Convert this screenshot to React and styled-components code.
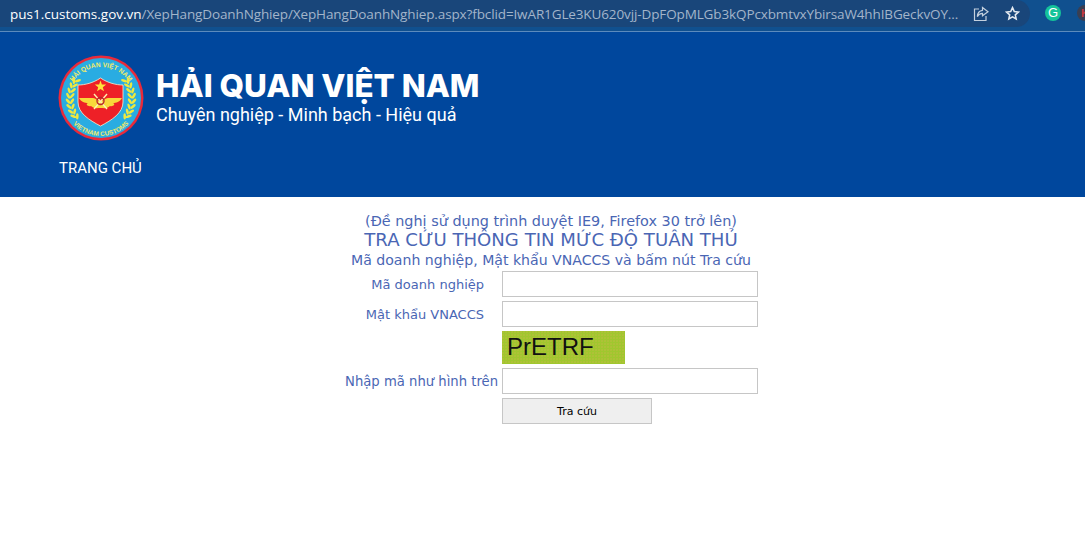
import React from "react";
import styled, { createGlobalStyle } from "styled-components";

const Global = createGlobalStyle`
  html, body { margin: 0; padding: 0; background: #fff; }
  body { width: 1085px; height: 556px; overflow: hidden; }
`;

const Chrome = styled.div`
  height: 31px;
  background: #10508f;
  border-bottom: 1px solid #5c8bbd;
  display: flex;
  align-items: flex-start;
`;

const Omnibox = styled.div`
  flex: none;
  width: 1030px;
  height: 27px;
  background: #19467a;
  border-radius: 0 14px 14px 0;
  display: flex;
  align-items: center;
  padding-left: 10px;
  box-sizing: border-box;
  font-family: "Open Sans", "Noto Sans", sans-serif;
  font-size: 13.5px;
  white-space: nowrap;
`;

const Host = styled.span`
  color: #fff;
`;

const UrlPath = styled.span`
  color: #a3b5ca;
  letter-spacing: -0.12px;
`;

const UrlText = styled.div`
  width: 954px;
`;

const OmniIcons = styled.div`
  display: flex;
  align-items: center;
  gap: 16px;
  margin-left: 9px;
`;

const Extensions = styled.div`
  display: flex;
  align-items: center;
  gap: 16px;
  padding: 5px 0 0 15px;
  overflow: hidden;
  flex: 1;
`;

const GrammarlyDot = styled.div`
  width: 16px;
  height: 16px;
  flex: none;
  border-radius: 50%;
  background: #15c39a;
  color: #fff;
  font: 13px/16px "Liberation Sans", sans-serif;
  text-align: center;
`;

const AvatarDot = styled.div`
  width: 16px;
  height: 16px;
  flex: none;
  border-radius: 50%;
  background: #3a3f52;
  color: #c8393f;
  font: bold 11px/16px "Liberation Sans", sans-serif;
  text-align: center;
`;

const Header = styled.header`
  height: 165px;
  background: #00479d;
  box-sizing: border-box;
  padding: 22px 0 0 57px;
  color: #fff;
`;

const Brand = styled.div`
  display: flex;
  align-items: flex-start;
  gap: 11px;
`;

const BrandText = styled.div`
  padding-top: 13px;
`;

const SiteTitle = styled.div`
  font-family: Inter, "Noto Sans", sans-serif;
  font-weight: 800;
  font-size: 31.4px;
  line-height: 38px;
  white-space: nowrap;
`;

const Slogan = styled.div`
  font-family: Roboto, sans-serif;
  font-size: 18px;
  line-height: 21px;
  margin-top: -1px;
`;

const NavLink = styled.div`
  font-family: Roboto, sans-serif;
  font-size: 15px;
  line-height: 20px;
  margin: 16px 0 0 2px;
`;

const Main = styled.main`
  width: 1102px;
  padding-top: 15px;
  font-family: "DejaVu Sans", Verdana, sans-serif;
  color: #4a66b4;
  text-align: center;
`;

const Note = styled.div`
  font-size: ${(p) => p.$size}px;
  line-height: ${(p) => p.$line}px;
  white-space: nowrap;
`;

const Heading = styled.div`
  font-size: 18.1px;
  line-height: 20px;
  white-space: nowrap;
`;

const Form = styled.div`
  display: grid;
  grid-template-columns: 498px 256px;
  column-gap: 4px;
  row-gap: 4px;
  margin-top: 1px;
  align-items: center;
`;

const Label = styled.label`
  font-size: ${(p) => p.$size || 13}px;
  text-align: right;
  padding-right: ${(p) => p.$pad || 0}px;
`;

const Field = styled.input`
  width: 256px;
  height: 26px;
  box-sizing: border-box;
  border: 1px solid #c6c6c6;
  background: #fff;
  padding: 0 4px;
  display: block;
  outline: none;
`;

const Captcha = styled.div`
  grid-column: 2;
  width: 123px;
  height: 33px;
  box-sizing: border-box;
  padding-left: 5px;
  background-color: #a0c72e;
  background-image: radial-gradient(circle at 1px 1px, #b3c03c 0.6px, transparent 1px);
  background-size: 3px 3px;
  font-family: "Liberation Sans", Arial, sans-serif;
  font-size: 24px;
  line-height: 31px;
  color: #111;
  text-align: left;
`;

const SubmitButton = styled.button`
  grid-column: 2;
  width: 150px;
  height: 26px;
  box-sizing: border-box;
  border: 1px solid #c6c6c6;
  background: #efefef;
  color: #000;
  font-family: "DejaVu Sans", Verdana, sans-serif;
  font-size: 11px;
  padding: 0;
`;

const ShareIcon = () => (
  <svg width="16" height="16" viewBox="0 0 16 16" fill="none" stroke="#c4d0de" strokeWidth="1.2">
    <path d="M6 3H1.5v11.5H13V10" />
    <path d="M9.5 1.5 15 5.8l-5.5 4V7.4C7 7.4 5.4 8.6 4.3 10.6 4.500 7.200 6.500 4.600 9.500 4.300z" />
  </svg>
);

const StarIcon = () => (
  <svg width="15" height="15" viewBox="0 0 16 16" fill="none" stroke="#e3e9f0" strokeWidth="1.7">
    <path d="M8 1.8l1.9 4.100 4.400.5-3.300 3 .9 4.400L8 11.600l-3.900 2.200.9-4.400-3.300-3 4.400-.5z" />
  </svg>
);

// wheat leaves for the left side of the wreath, the right side is mirrored
const leafAngles = [-36, -26, -16, -6, 4, 14, 24, 34];

const Wreath = () => (
  <g fill="#efe93e">
    {leafAngles.map((deg) => {
      const rad = (deg * Math.PI) / 180;
      const x = 44 - 31 * Math.cos(rad);
      const y = 45 + 31 * Math.sin(rad);
      return (
        <g key={deg}>
          <ellipse cx={x - 2} cy={y} rx="3.2" ry="1.3" transform={`rotate(${-deg + 55} ${x - 2} ${y})`} />
          <ellipse cx={x + 2} cy={y} rx="3.2" ry="1.3" transform={`rotate(${-deg - 55} ${x + 2} ${y})`} />
        </g>
      );
    })}
  </g>
);

const Logo = () => (
  <svg width="88" height="88" viewBox="0 0 88 88" style={{ display: "block" }}>
    <defs>
      <path id="arcTop" d="M10 47A34 34 0 0 1 78 47" />
      <path id="arcBottom" d="M6 44A38 38 0 0 0 82 44" />
    </defs>
    <circle cx="44" cy="44" r="42.500" fill="#e92a3a" />
    <circle cx="44" cy="44" r="40" fill="#29ace2" />
    <text fontFamily="Liberation Sans, sans-serif" fontWeight="700" fontSize="6.6" fill="#f2ea6a">
      <textPath href="#arcTop" startOffset="50%" textAnchor="middle">HẢI QUAN VIỆT NAM</textPath>
    </text>
    <text fontFamily="Liberation Sans, sans-serif" fontWeight="700" fontSize="6.4" fill="#f2ea6a">
      <textPath href="#arcBottom" startOffset="50%" textAnchor="middle">VIETNAM CUSTOMS</textPath>
    </text>
    <Wreath />
    <g transform="translate(88 0) scale(-1 1)">
      <Wreath />
    </g>
    <path d="M43.500 24C36 29 28 31 21 31V48C21 59 32 66 43.500 72 55 66 66 59 66 48V31C59 31 51 29 43.500 24z" fill="#ee2027" stroke="#f6f0d0" strokeWidth="0.8" />
    <path d="M43.500 26.500l1.400 4 4.300.1-3.400 2.600 1.200 4.100-3.500-2.400-3.500 2.400 1.200-4.100-3.400-2.600 4.300-.1z" fill="#ffe23a" />
    <path d="M22 44H36C39 44 40 47 43.500 47 47 47 48 44 51 44H65C63 48 59 49 56 49 59 50 56 53 53 52 50 55 47 54 43.500 54 40 54 37 55 34 52 31 53 28 50 31 49 28 49 24 48 22 44z" fill="#f8d93a" />
    <g fill="none" stroke="#fff2b0" strokeWidth="1.4">
      <path d="M37 40 50 55" />
      <path d="M50 40 37 55" />
      <circle cx="43.500" cy="47" r="3.500" stroke="#b8262b" />
    </g>
  </svg>
);

export default function App() {
  return (
    <>
      <Global />
      <Chrome>
        <Omnibox>
          <UrlText>
            <Host>pus1.customs.gov.vn</Host>
            <UrlPath>/XepHangDoanhNghiep/XepHangDoanhNghiep.aspx?fbclid=IwAR1GLe3KU620vjj-DpFOpMLGb3kQPcxbmtvxYbirsaW4hhIBGeckvOY...</UrlPath>
          </UrlText>
          <OmniIcons>
            <ShareIcon />
            <StarIcon />
          </OmniIcons>
        </Omnibox>
        <Extensions>
          <GrammarlyDot>G</GrammarlyDot>
          <AvatarDot>K</AvatarDot>
        </Extensions>
      </Chrome>
      <Header>
        <Brand>
          <Logo />
          <BrandText>
            <SiteTitle>HẢI QUAN VIỆT NAM</SiteTitle>
            <Slogan>Chuyên nghiệp - Minh bạch - Hiệu quả</Slogan>
          </BrandText>
        </Brand>
        <NavLink>TRANG CHỦ</NavLink>
      </Header>
      <Main>
        <Note $size={14.4} $line={18}>(Đề nghị sử dụng trình duyệt IE9, Firefox 30 trở lên)</Note>
        <Heading>TRA CỨU THÔNG TIN MỨC ĐỘ TUÂN THỦ</Heading>
        <Note $size={14.1} $line={20}>Mã doanh nghiệp, Mật khẩu VNACCS và bấm nút Tra cứu</Note>
        <Form>
          <Label $pad={14}>Mã doanh nghiệp</Label>
          <Field />
          <Label $pad={14}>Mật khẩu VNACCS</Label>
          <Field />
          <Captcha>PrETRF</Captcha>
          <Label $size={13.2}>Nhập mã như hình trên</Label>
          <Field />
          <SubmitButton>Tra cứu</SubmitButton>
        </Form>
      </Main>
    </>
  );
}
